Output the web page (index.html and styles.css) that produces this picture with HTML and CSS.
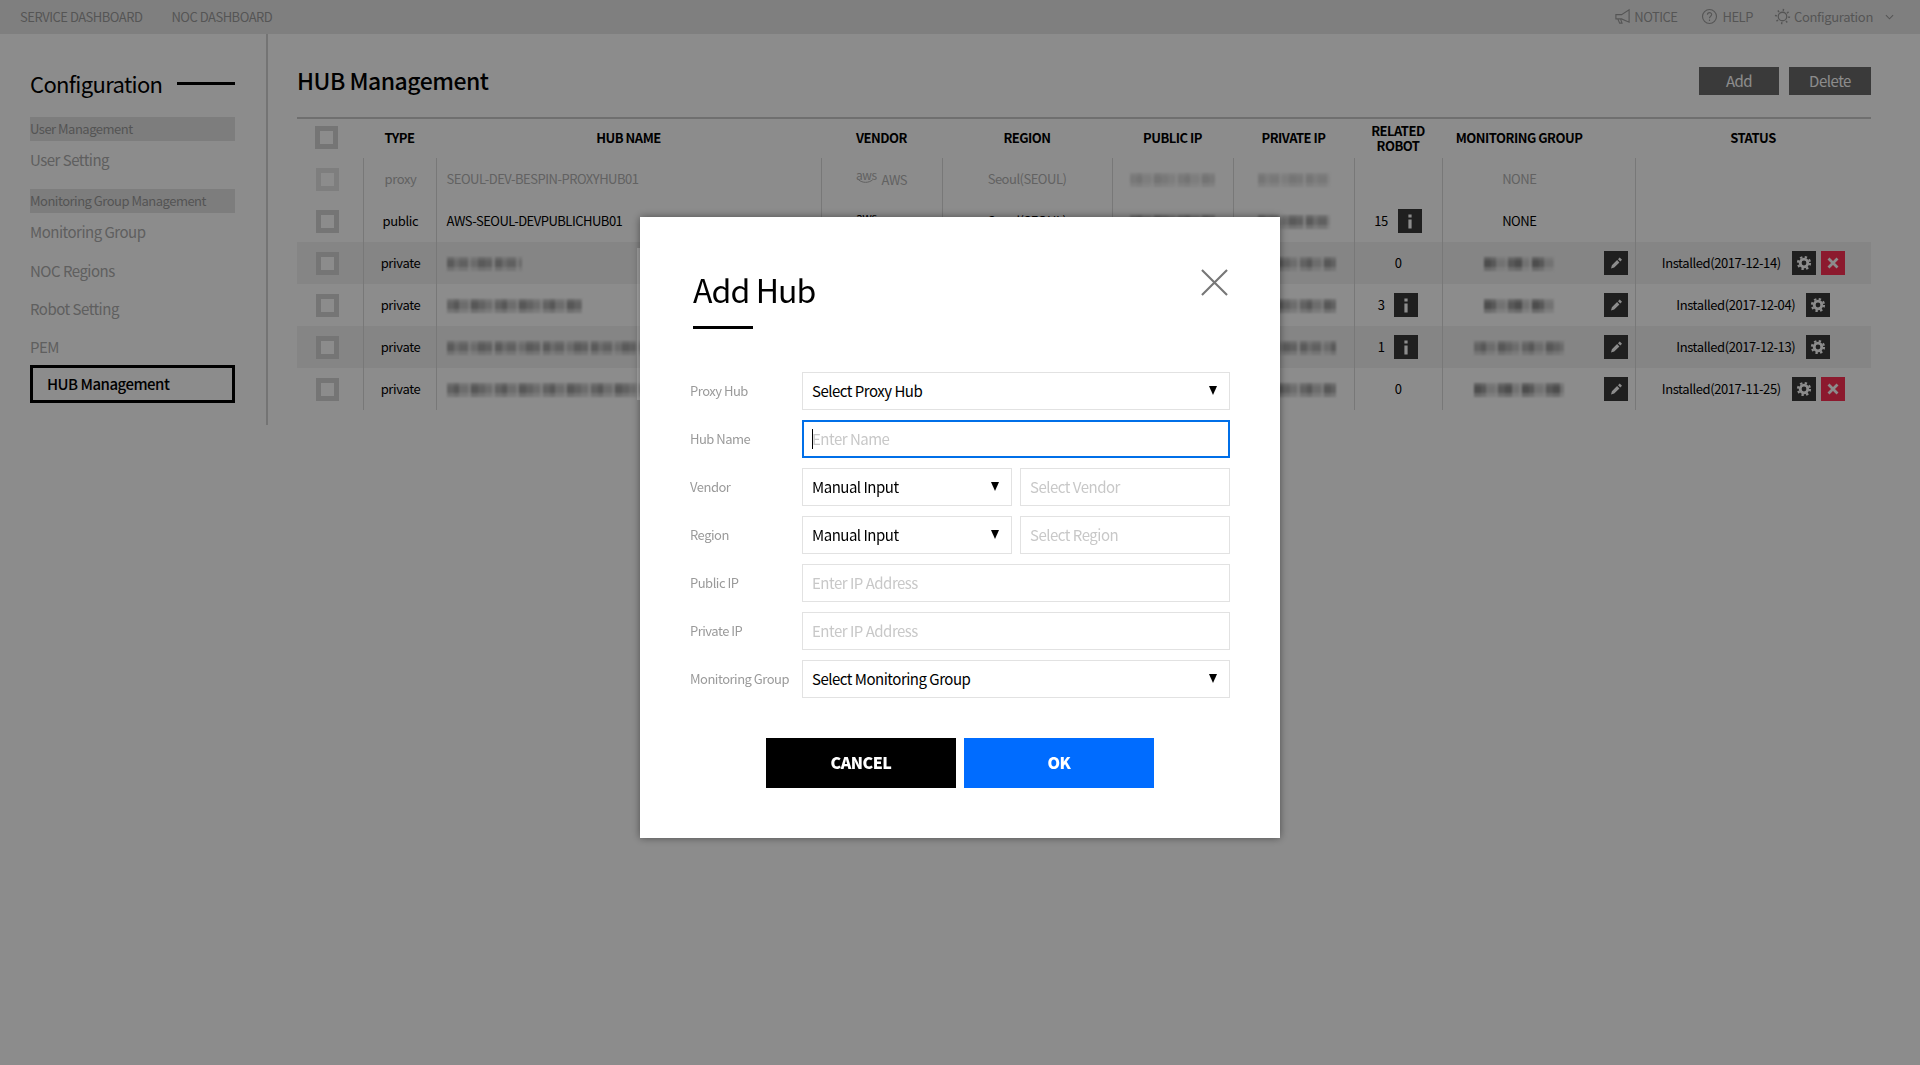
FILE: index.html
```html
<!DOCTYPE html>
<html lang="en">
<head>
<meta charset="utf-8">
<title>HUB Management</title>
<link rel="stylesheet" href="styles.css">
</head>
<body>
<svg class="sprite" width="0" height="0" aria-hidden="true">
  <symbol id="gear" viewBox="0 0 24 24">
    <circle cx="12" cy="12" r="3.800" fill="none" stroke="currentColor" stroke-width="2.800"/>
    <circle cx="12" cy="12" r="6" fill="none" stroke="currentColor" stroke-width="2.200" stroke-dasharray="2.360 2.352"/>
  </symbol>
  <symbol id="pencil" viewBox="0 0 24 24">
    <path d="M7 17.500l.9-3.200 5.200-5.200 2.300 2.300-5.200 5.200zM14 8.200l1.700-1.700 2.300 2.300-1.700 1.700z" fill="currentColor"/>
  </symbol>
  <symbol id="cross" viewBox="0 0 24 24">
    <path d="M7.500 7.500l9 9M16.500 7.500l-9 9" fill="none" stroke="currentColor" stroke-width="2.800"/>
  </symbol>
  <symbol id="info" viewBox="0 0 24 24">
    <rect x="10.400" y="5.500" width="3.200" height="3" fill="currentColor"/>
    <rect x="10.400" y="10.500" width="3.200" height="9" fill="currentColor"/>
  </symbol>
  <symbol id="smile" viewBox="0 0 20 6">
    <path d="M1 1c5 4 12 4 17 0" fill="none" stroke="currentColor" stroke-width="1.200"/>
  </symbol>
</svg>

<div class="app">
  <header class="topbar">
    <nav class="topnav">
      <a>SERVICE DASHBOARD</a>
      <a>NOC DASHBOARD</a>
    </nav>
    <div class="toputil">
      <a class="util util-notice">
        <svg class="uicon" viewBox="0 0 18 18"><path d="M16 2v13L8 11.500H2V7h6zM4 11.500L6 16h2.500L7 11.800" fill="none" stroke="currentColor" stroke-width="1.200"/></svg>NOTICE
      </a>
      <a class="util util-help">
        <svg class="uicon" viewBox="0 0 18 18"><circle cx="9" cy="9" r="7.400" fill="none" stroke="currentColor" stroke-width="1.200"/><path d="M6.800 7.200c0-3 4.500-3 4.500-.2 0 1.800-2.300 1.800-2.300 3.800M9 12.300v1.500" fill="none" stroke="currentColor" stroke-width="1.200"/></svg>HELP
      </a>
      <a class="util util-config">
        <svg class="uicon" viewBox="0 0 24 24"><circle cx="12" cy="12" r="6" fill="none" stroke="currentColor" stroke-width="1.800"/><circle cx="12" cy="12" r="9.300" fill="none" stroke="currentColor" stroke-width="3" stroke-dasharray="2 5.300"/></svg>Configuration
        <svg class="chev" viewBox="0 0 10 6"><path d="M1 1l4 4 4-4" fill="none" stroke="currentColor" stroke-width="1.200"/></svg>
      </a>
    </div>
  </header>

  <div class="body">
    <aside class="sidebar">
      <h2 class="side-title">Configuration</h2>
      <div class="side-group">User Management</div>
      <a class="side-link side-link-first">User Setting</a>
      <div class="side-group side-group-next">Monitoring Group Management</div>
      <a class="side-link side-link-first">Monitoring Group</a>
      <a class="side-link">NOC Regions</a>
      <a class="side-link">Robot Setting</a>
      <a class="side-link">PEM</a>
      <a class="side-active">HUB Management</a>
    </aside>

    <main class="content">
      <div class="content-head">
        <h1 class="page-title">HUB Management</h1>
        <div class="actions">
          <button class="btn-dark btn-add">Add</button>
          <button class="btn-dark btn-delete">Delete</button>
        </div>
      </div>

      <table class="hubs">
        <colgroup>
          <col class="c-check"><col class="c-type"><col class="c-name"><col class="c-vendor"><col class="c-region"><col class="c-ip"><col class="c-ip"><col class="c-robot"><col class="c-group"><col class="c-edit"><col class="c-status">
        </colgroup>
        <thead>
          <tr>
            <th><span class="check check-head"></span></th>
            <th>TYPE</th><th>HUB NAME</th><th>VENDOR</th><th>REGION</th><th>PUBLIC IP</th><th>PRIVATE IP</th>
            <th>RELATED<br>ROBOT</th><th>MONITORING GROUP</th><th></th><th>STATUS</th>
          </tr>
        </thead>
        <tbody>
          <tr class="row-off">
            <td class="first"><span class="check"></span></td>
            <td class="type">proxy</td>
            <td class="name">SEOUL-DEV-BESPIN-PROXYHUB01</td>
            <td><span class="vendor"><span class="aws">aws<svg class="smile"><use href="#smile"/></svg></span>AWS</span></td>
            <td>Seoul(SEOUL)</td>
            <td><span class="mosaic m2" style="width:85px"></span></td>
            <td><span class="mosaic m1" style="width:72px"></span></td>
            <td></td>
            <td>NONE</td><td class="joined"></td><td></td>
          </tr>
          <tr>
            <td class="first"><span class="check"></span></td>
            <td class="type">public</td>
            <td class="name">AWS-SEOUL-DEVPUBLICHUB01</td>
            <td><span class="vendor"><span class="aws">aws<svg class="smile"><use href="#smile"/></svg></span>AWS</span></td>
            <td>Seoul(SEOUL)</td>
            <td><span class="mosaic m2" style="width:85px"></span></td>
            <td><span class="mosaic m1" style="width:72px"></span></td>
            <td><span class="robot">15<span class="icon-btn"><svg><use href="#info"/></svg></span></span></td>
            <td>NONE</td><td class="joined"></td><td></td>
          </tr>
          <tr class="zebra">
            <td class="first"><span class="check"></span></td>
            <td class="type">private</td>
            <td class="name"><span class="mosaic m1" style="width:75px"></span></td>
            <td></td><td></td>
            <td><span class="mosaic m2" style="width:85px"></span></td>
            <td><span class="mosaic m2" style="width:84px"></span></td>
            <td>0</td>
            <td><span class="mosaic m3" style="width:70px"></span></td>
            <td class="joined"><span class="icon-btn"><svg><use href="#pencil"/></svg></span></td>
            <td><span class="status">Installed(2017-12-14)<span class="icon-btn first-act"><svg><use href="#gear"/></svg></span><span class="icon-btn danger"><svg><use href="#cross"/></svg></span></span></td>
          </tr>
          <tr>
            <td class="first"><span class="check"></span></td>
            <td class="type">private</td>
            <td class="name"><span class="mosaic m2" style="width:135px"></span></td>
            <td></td><td></td>
            <td><span class="mosaic m1" style="width:85px"></span></td>
            <td><span class="mosaic m2" style="width:84px"></span></td>
            <td><span class="robot">3<span class="icon-btn"><svg><use href="#info"/></svg></span></span></td>
            <td><span class="mosaic m3" style="width:70px"></span></td>
            <td class="joined"><span class="icon-btn"><svg><use href="#pencil"/></svg></span></td>
            <td><span class="status">Installed(2017-12-04)<span class="icon-btn first-act"><svg><use href="#gear"/></svg></span></span></td>
          </tr>
          <tr class="zebra">
            <td class="first"><span class="check"></span></td>
            <td class="type">private</td>
            <td class="name"><span class="mosaic m1" style="width:240px"></span></td>
            <td></td><td></td>
            <td><span class="mosaic m2" style="width:85px"></span></td>
            <td><span class="mosaic m1" style="width:84px"></span></td>
            <td><span class="robot">1<span class="icon-btn"><svg><use href="#info"/></svg></span></span></td>
            <td><span class="mosaic m2" style="width:90px"></span></td>
            <td class="joined"><span class="icon-btn"><svg><use href="#pencil"/></svg></span></td>
            <td><span class="status">Installed(2017-12-13)<span class="icon-btn first-act"><svg><use href="#gear"/></svg></span></span></td>
          </tr>
          <tr>
            <td class="first"><span class="check"></span></td>
            <td class="type">private</td>
            <td class="name"><span class="mosaic m2" style="width:240px"></span></td>
            <td></td><td></td>
            <td><span class="mosaic m1" style="width:85px"></span></td>
            <td><span class="mosaic m2" style="width:84px"></span></td>
            <td>0</td>
            <td><span class="mosaic m3" style="width:90px"></span></td>
            <td class="joined"><span class="icon-btn"><svg><use href="#pencil"/></svg></span></td>
            <td><span class="status">Installed(2017-11-25)<span class="icon-btn first-act"><svg><use href="#gear"/></svg></span><span class="icon-btn danger"><svg><use href="#cross"/></svg></span></span></td>
          </tr>
        </tbody>
      </table>
    </main>
  </div>
</div>

<div class="scrim">
  <span class="scroll-strip"></span>
  <section class="modal">
    <div class="modal-head">
      <h2 class="modal-title">Add Hub</h2>
      <svg class="modal-close" viewBox="0 0 28 28"><path d="M1 1l26 26M27 1L1 27" fill="none" stroke="currentColor" stroke-width="2.200"/></svg>
    </div>
    <form class="hub-form">
      <label class="f-label">Proxy Hub</label>
      <div class="f-select">Select Proxy Hub</div>

      <label class="f-label">Hub Name</label>
      <div class="f-wrap">
        <input class="f-input f-focus" placeholder="Enter Name">
        <span class="text-cursor"></span>
      </div>

      <label class="f-label">Vendor</label>
      <div class="f-pair">
        <div class="f-select">Manual Input</div>
        <input class="f-input" placeholder="Select Vendor">
      </div>

      <label class="f-label">Region</label>
      <div class="f-pair">
        <div class="f-select">Manual Input</div>
        <input class="f-input" placeholder="Select Region">
      </div>

      <label class="f-label">Public IP</label>
      <input class="f-input" placeholder="Enter IP Address">

      <label class="f-label">Private IP</label>
      <input class="f-input" placeholder="Enter IP Address">

      <label class="f-label">Monitoring Group</label>
      <div class="f-select">Select Monitoring Group</div>
    </form>
    <div class="modal-actions">
      <button class="m-btn m-cancel">CANCEL</button>
      <button class="m-btn m-ok">OK</button>
    </div>
  </section>
</div>
</body>
</html>
```

FILE: styles.css
```css
* { box-sizing: border-box; }
html, body { margin: 0; height: 100%; }
body {
  background: #fff;
  color: #000;
  font-family: "Noto Sans CJK KR", "Noto Sans", sans-serif;
  font-size: 13px;
  letter-spacing: -.5px;
  overflow: hidden;
}
.sprite { position: absolute; }
h1, h2 { margin: 0; font-weight: 400; }

/* top bar */
.topbar {
  height: 34px;
  background: #e8e8e8;
  display: flex;
  justify-content: space-between;
  align-items: center;
  padding: 0 26px 1px 20px;
  color: #9c9c9c;
}
.topnav { display: flex; gap: 29px; }
.toputil { display: flex; align-items: center; }
.util { display: flex; align-items: center; gap: 3px; }
.util-notice { margin-right: 23px; }
.util-help { margin-right: 21px; gap: 5px; }
.util-config { letter-spacing: -.32px; }
.uicon { width: 17px; height: 17px; }
.chev { width: 9px; height: 6px; margin-left: 9px; }

/* layout */
.body { display: flex; }
.sidebar {
  width: 268px;
  height: 391px;
  border-right: 2px solid #d4d4d4;
  padding: 32px 31px 0 30px;
}
.side-title {
  display: flex;
  align-items: center;
  gap: 15px;
  font-size: 22px;
  letter-spacing: -.65px;
  line-height: 34px;
  margin-bottom: 17px;
}
.side-title::after {
  content: "";
  flex: 1;
  height: 3px;
  background: #000;
}
.side-group {
  height: 24px;
  line-height: 24px;
  background: #e4e4e4;
  color: #9a9a9a;
}
.side-group-next { margin-top: 8px; }
.side-link {
  display: block;
  height: 38px;
  line-height: 35px;
  font-size: 15px;
  color: #adadad;
}
.side-link-first { height: 40px; line-height: 38px; }
.side-active {
  display: block;
  height: 38px;
  line-height: 31px;
  border: 3px solid #000;
  padding-left: 14px;
  font-size: 15px;
  font-weight: 500;
  margin-top: -2px;
}

.content { flex: 1; padding: 33px 49px 0 29px; }
.content-head {
  display: flex;
  justify-content: space-between;
  align-items: center;
  height: 28px;
  margin-bottom: 22px;
}
.page-title { font-size: 23px; font-weight: 500; line-height: 26px; padding-bottom: 2px; }
.actions { display: flex; gap: 10px; }
.btn-dark {
  height: 28px;
  border: 0;
  padding: 0 0 2px;
  background: #6a6a6a;
  color: #fff;
  font: inherit;
  font-size: 15px;
  letter-spacing: inherit;
}
.btn-add { width: 80px; }
.btn-delete { width: 82px; }

/* table */
.hubs {
  width: 100%;
  table-layout: fixed;
  border-collapse: collapse;
  border-top: 2px solid #cacaca;
}
.c-check { width: 66px; }
.c-type { width: 73px; }
.c-name { width: 385px; }
.c-vendor { width: 121px; }
.c-region { width: 170px; }
.c-ip { width: 121px; }
.c-robot { width: 88px; }
.c-group { width: 154px; }
.c-edit { width: 39px; }
.c-status { width: 236px; }
.hubs th {
  height: 40px;
  padding: 0 0 2px;
  font-size: 13px;
  font-weight: 700;
  line-height: 15px;
}
.hubs td {
  height: 42px;
  padding: 0 0 1px;
  text-align: center;
  border-left: 1px solid #dadada;
}
.hubs td.first, .hubs td.joined { border-left: 0; }
.hubs td.first { padding: 0; }
.hubs td.joined { padding-left: 2px; }
.hubs td.type { padding-left: 2px; letter-spacing: -.35px; }
.hubs td.name { text-align: left; padding-left: 10px; white-space: nowrap; overflow: hidden; }
.zebra td { background: #f2f2f2; }
.row-off td { color: #b2b2b2; }
.row-off .check { border-color: #e6e6e6; }
.row-off .mosaic { opacity: .45; }

.check {
  display: block;
  width: 23px;
  height: 23px;
  margin-left: 19px;
  border: 5px solid #d6d6d6;
  background: #fff;
}
.check-head { margin-left: 18px; }

.mosaic {
  display: inline-block;
  height: 14px;
  vertical-align: middle;
  filter: blur(.8px);
  background-image:
    linear-gradient(180deg, rgba(255,255,255,.3) 0 3px, transparent 3px 10px, rgba(255,255,255,.45) 10px),
    repeating-linear-gradient(90deg, var(--a) 0 7px, var(--b) 7px 12px, var(--c) 12px 21px, #dedede 21px 24px, var(--b) 24px 31px, var(--a) 31px 38px, var(--c) 38px 45px, #e6e6e6 45px 48px);
}
.m1 { --a: #a4a4a4; --b: #c4c4c4; --c: #b0b0b0; }
.m2 { --a: #b2b2b2; --b: #9e9e9e; --c: #c6c6c6; }
.m3 { --a: #8c8c8c; --b: #a0a0a0; --c: #d0d0d0; }

.vendor { display: inline-flex; align-items: center; gap: 5px; }
.aws {
  position: relative;
  top: -3px;
  display: inline-flex;
  flex-direction: column;
  align-items: center;
  font-size: 12px;
  line-height: 9px;
}
.smile { width: 20px; height: 5px; }

.icon-btn {
  display: inline-flex;
  vertical-align: middle;
  width: 24px;
  height: 24px;
  background: #3a3a3a;
  color: #fff;
}
.icon-btn svg { width: 24px; height: 24px; }
.danger { background: #ff3054; margin-left: 5px; }
.first-act { margin-left: 11px; }
.robot { display: inline-flex; align-items: center; gap: 10px; }
.status { display: inline-flex; align-items: center; letter-spacing: -.42px; }

/* dialog layer */
.scrim {
  position: fixed;
  inset: 0;
  background: rgba(0, 0, 0, .45);
  display: flex;
  justify-content: center;
  align-items: flex-start;
  padding-top: 217px;
}
.scroll-strip {
  position: absolute;
  left: 637px;
  top: 248px;
  width: 3px;
  height: 152px;
  background: rgba(255, 255, 255, .25);
}
.modal {
  position: relative;
  width: 640px;
  height: 621px;
  background: #fff;
  box-shadow: 0 0 8px rgba(0, 0, 0, .45);
  padding: 0 50px;
}
.modal-head { position: relative; height: 155px; padding: 46px 0 0 3px; }
.modal-title {
  font-size: 32px;
  letter-spacing: -.9px;
  line-height: 52px;
  width: 122px;
  white-space: nowrap;
}
.modal-title::after {
  content: "";
  display: block;
  width: 60px;
  height: 3px;
  margin-top: 11px;
  background: #000;
}
.modal-close {
  position: absolute;
  right: 2px;
  top: 52px;
  width: 27px;
  height: 27px;
  color: #777;
}
.hub-form {
  display: grid;
  grid-template-columns: 112px 428px;
  grid-auto-rows: 38px;
  row-gap: 10px;
  align-items: center;
}
.f-label { font-size: 13px; color: #9a9a9a; padding-bottom: 1px; }
.f-input, .f-select {
  display: block;
  width: 100%;
  height: 38px;
  border: 1px solid #e2e2e2;
  outline: 0;
  padding: 0 9px 1px;
  font: inherit;
  font-size: 15px;
  letter-spacing: inherit;
  line-height: 36px;
  background: #fff;
  color: #000;
}
.f-input::placeholder { color: #c8c8c8; opacity: 1; }
.f-focus { border: 2px solid #006fe8; padding: 0 8px 1px; }
.f-select { position: relative; }
.f-select::after {
  content: "";
  position: absolute;
  right: 12px;
  top: 13px;
  border-left: 4.500px solid transparent;
  border-right: 4.500px solid transparent;
  border-top: 9px solid #000;
}
.f-wrap { position: relative; height: 38px; }
.text-cursor {
  position: absolute;
  left: 10px;
  top: 9px;
  width: 1px;
  height: 20px;
  background: #000;
}
.f-pair { display: grid; grid-template-columns: 210px 210px; column-gap: 8px; }
.modal-actions {
  display: flex;
  justify-content: center;
  gap: 8px;
  margin-top: 40px;
}
.m-btn {
  width: 190px;
  height: 50px;
  border: 0;
  padding: 0 0 2px;
  color: #fff;
  font: inherit;
  font-size: 16px;
  letter-spacing: inherit;
  font-weight: 900;
}
.m-cancel { background: #000; }
.m-ok { background: #006cff; }
```
